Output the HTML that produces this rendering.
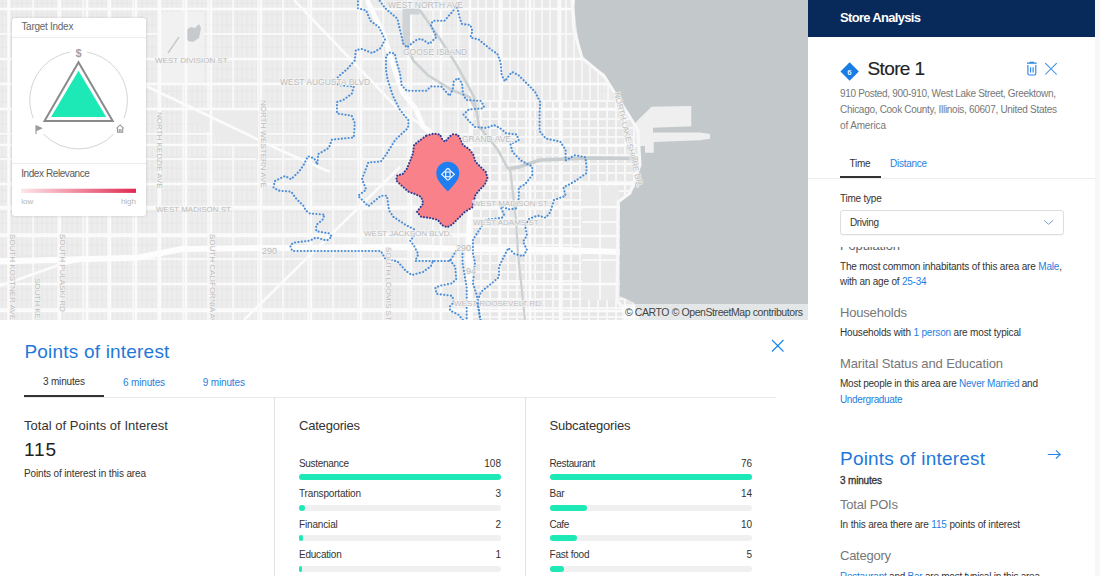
<!DOCTYPE html>
<html><head><meta charset="utf-8">
<style>
*{margin:0;padding:0;box-sizing:border-box}
html,body{width:1100px;height:576px;overflow:hidden;background:#fff;font-family:"Liberation Sans",sans-serif;color:#333;position:relative}
.a{position:absolute}
.t{position:absolute;white-space:nowrap;line-height:1}
.b{color:#1f7fdf}
#map{position:absolute;left:0;top:0;width:808px;height:320px;overflow:hidden;background:#e9e9e9}
.bar{position:absolute;height:6px;border-radius:3px;background:#f0f0f0}
.bar i{position:absolute;left:0;top:0;height:6px;border-radius:3px;background:#1de9b6}
</style></head><body>
<div id="map"><svg width="808" height="320" viewBox="0 0 808 320" style="position:absolute;left:0;top:0">
<rect width="808" height="320" fill="#ededed"/>
<path d="M2 0V320M7 0V320M12 0V320M17 0V320M22 0V320M27 0V320M32 0V320M37 0V320M42 0V320M47 0V320M52 0V320M57 0V320M62 0V320M67 0V320M72 0V320M77 0V320M82 0V320M87 0V320M92 0V320M97 0V320M102 0V320M107 0V320M112 0V320M117 0V320M122 0V320M127 0V320M132 0V320M137 0V320M142 0V320M147 0V320M152 0V320M157 0V320M162 0V320M167 0V320M172 0V320M177 0V320M182 0V320M187 0V320M192 0V320M197 0V320M202 0V320M207 0V320M212 0V320M217 0V320M222 0V320M227 0V320M232 0V320M237 0V320M242 0V320M247 0V320M252 0V320M257 0V320M262 0V320M267 0V320M272 0V320M277 0V320M282 0V320M287 0V320M292 0V320M297 0V320M302 0V320M307 0V320M312 0V320M317 0V320M322 0V320M327 0V320M332 0V320M337 0V320M342 0V320M347 0V320M352 0V320M357 0V320M362 0V320M367 0V320M372 0V320M377 0V320M382 0V320M387 0V320M392 0V320M397 0V320M402 0V320M407 0V320M412 0V320M417 0V320M422 0V320M427 0V320M432 0V320M437 0V320M442 0V320M447 0V320M452 0V320M457 0V320M462 0V320M467 0V320M472 0V320M477 0V320M482 0V320M487 0V320M492 0V320M497 0V320M502 0V320M507 0V320M512 0V320M517 0V320M522 0V320M527 0V320M532 0V320M537 0V320M542 0V320M547 0V320M552 0V320M557 0V320M562 0V320M567 0V320M572 0V320M577 0V320M582 0V320M587 0V320M592 0V320M597 0V320M602 0V320M607 0V320M612 0V320M617 0V320M622 0V320M627 0V320M632 0V320M637 0V320M642 0V320M647 0V320M652 0V320M657 0V320M662 0V320M667 0V320M672 0V320M677 0V320M682 0V320M687 0V320M692 0V320M697 0V320M702 0V320M707 0V320M712 0V320M717 0V320M722 0V320M727 0V320M732 0V320M737 0V320M742 0V320M747 0V320M752 0V320M757 0V320M762 0V320M767 0V320M772 0V320M777 0V320M782 0V320M787 0V320M792 0V320M797 0V320M802 0V320M807 0V320M0 3H808M0 14H808M0 25H808M0 36H808M0 47H808M0 58H808M0 69H808M0 80H808M0 91H808M0 102H808M0 113H808M0 124H808M0 135H808M0 146H808M0 157H808M0 168H808M0 179H808M0 190H808M0 201H808M0 212H808M0 223H808M0 234H808M0 245H808M0 256H808M0 267H808M0 278H808M0 289H808M0 300H808M0 311H808" stroke="#e4e4e4" stroke-width="0.8" fill="none"/>
<path d="M8 0V320M33 0V320M58 0V320M83 0V320M108 0V320M133 0V320M158 0V320M183 0V320M208 0V320M233 0V320M258 0V320M283 0V320M308 0V320M333 0V320M358 0V320M383 0V320M408 0V320M433 0V320M458 0V320M483 0V320M508 0V320M533 0V320M558 0V320M583 0V320M608 0V320M633 0V320M658 0V320M683 0V320M708 0V320M733 0V320M758 0V320M783 0V320M0 9H808M0 34H808M0 59H808M0 84H808M0 109H808M0 134H808M0 159H808M0 184H808M0 209H808M0 234H808M0 259H808M0 284H808M0 309H808" stroke="#f8f8f8" stroke-width="1.8" fill="none"/>
<path d="M470 100H660V320H470Z" fill="#e7e7e7"/>
<path d="M472 100V320M481 100V320M490 100V320M499 100V320M508 100V320M517 100V320M526 100V320M535 100V320M544 100V320M553 100V320M562 100V320M571 100V320M580 100V320M589 100V320M598 100V320M607 100V320M616 100V320M625 100V320M634 100V320M643 100V320M652 100V320M470 101H660M470 110H660M470 119H660M470 128H660M470 137H660M470 146H660M470 155H660M470 164H660M470 173H660M470 182H660M470 191H660M470 200H660M470 209H660M470 218H660M470 227H660M470 236H660M470 245H660M470 254H660M470 263H660M470 272H660M470 281H660M470 290H660M470 299H660M470 308H660M470 317H660" stroke="#f7f7f7" stroke-width="2" fill="none"/>
<path d="M462 0H600V100H462Z" fill="#e9e9e9"/>
<path d="M470 0V100M478 0V100M486 0V100M494 0V100M502 0V100M510 0V100M518 0V100M526 0V100M534 0V100M542 0V100M550 0V100M558 0V100M566 0V100M574 0V100M582 0V100M590 0V100M598 0V100M462 9H600M462 34H600M462 59H600M462 84H600" stroke="#f7f7f7" stroke-width="1.8" fill="none"/>
<path d="M160 12H204V84H160Z" fill="#f1f1f1"/>
<path d="M186 30l5-3 4 1 4-4 2 4-2 10-6 4-5-1-3-5Z" fill="#c6cacc"/><path d="M179 37L168 53" stroke="#c6cacc" stroke-width="1.5"/>
<path d="M185 110H258V160L185 118Z" fill="#ebebeb"/>
<path d="M582 186H619V300H582Z" fill="#eaeaea"/><path d="M582 222H619M582 260H619M600 186V300" stroke="#f8f8f8" stroke-width="2"/>
<path d="M0 9H808M0 59H808M0 84H808M0 109H808M0 145H808M0 184H808M0 207H808M0 236H808M0 284H808M0 311H808M9 0V320M60 0V320M87 0V320M110 0V320M136 0V320M160 0V320M186 0V320M211 0V320M261 0V320M311 0V320M361 0V320M411 0V320M441 0V320M470 0V320M500 0V320M530 0V320M560 0V320" stroke="#fbfbfb" stroke-width="2.6" fill="none"/>
<path d="M146 86L280 150L330 172M294 0L400 111L445 140M0 286L56 266L90 258M244 320L400 167" stroke="#fbfbfb" stroke-width="2.6" fill="none"/>
<path d="M0 261.4L86 259L137.5 257.7L181.6 249L270 247.9L400 247L470 249L560 250L620 252" stroke="#fdfdfd" stroke-width="6" fill="none"/>
<path d="M367 0L384.3 36.5L391.6 60.75L402.5 92.3L416 109L423 126.4L440 140L462 160L470 200L468 250L470 320" stroke="#fdfdfd" stroke-width="5" fill="none"/>
<path d="M419.5 9.7L440 39L457 65.6L474 97L479 126.4M406 9.7L406 44L413.5 60.75L428 75.3L452 90L469.4 97L476.6 111.8L479 126.4L498 150L508 169" stroke="#cbd0d2" stroke-width="2.6" fill="none"/>
<path d="M402.5 8.5H419.5V14.6H410V45H402.5Z" fill="#cfd3d5"/>
<path d="M508 169L519 167L540 160L590 158L638 158.5" stroke="#c8cdcf" stroke-width="3.5" fill="none"/>
<path d="M510 168L516 220L518 254L525 320" stroke="#cdd1d3" stroke-width="2.2" fill="none"/>
<path d="M575 0L574.4 8.3L576.4 27.8L580.5 52.8L584.7 59.7L594.4 68L604 73.6L615 91.7L626 110L635 124L638 146.6L638 169.5L634.7 187L627.7 195.6L620 200.8L619.7 296L633.75 302.5L640 320L808 320L808 0Z" fill="#c3c9cb"/>
<path d="M634 124L651.4 106.7L691.25 106L691.25 126.25L653 127.8L653 132.5L699.8 132.5L710 134L710 138.75L699.8 140.3L653.75 141.9L653.75 152.8L645 152.8L645 146L637 146Z" fill="#efefef"/>
<path d="M637 157H640V162H637Z" fill="#cdd1d3"/>
<path d="M572 0L574 30L582 58L604 76L638 130L640 165L630 193L618 202L617 300L630 320" stroke="#f8f8f8" stroke-width="3" fill="none"/>
<path d="M358.0 -2.0 L357.9 8.3 L366.2 10.4 L370.4 20.8 L378.8 27.0 L385.0 39.6 L380.8 47.9 L372.5 53.1 L362.0 49.0 L355.8 50.0 L354.8 60.4 L347.5 68.8 L341.2 74.0 L334.0 81.2 L339.0 85.4 L353.8 86.5 L351.7 93.8 L343.3 100.0 L337.0 102.0 L337.0 113.5 L351.7 115.6 L354.8 123.0 L353.8 137.5 L343.3 138.5 L331.9 139.6 L328.8 148.0 L318.3 154.0 L317.3 164.6 L314.2 158.3 L308.0 156.2 L303.8 164.6 L299.6 170.8 L291.2 179.2 L285.0 176.0 L274.6 181.2 L273.5 187.5 L278.8 190.6 L291.2 191.7 L296.5 199.0 L303.8 206.2 L305.8 210.4 L310.0 213.5 L324.6 214.6 L322.5 219.8 L316.2 225.0 L316.2 231.2 L328.8 233.3 L331.9 236.5 L326.7 240.6 L316.2 237.5 L310.0 240.6 L293.3 242.7 L290.2 245.8 L292.3 251.0 L322.5 251.0 L380.8 251.0 L385.0 258.3 L397.5 261.5 L405.8 270.8 L412.0 275.0 L423.0 272.0 L431.0 266.0 L433.0 261.0 L450.0 261.0 L453.0 256.0 L456.0 251.0 L462.5 250.0 L462.5 262.5 L464.6 275.0 L466.7 287.5 L466.7 322.0" fill="none" stroke="#4a8ed8" stroke-width="2.1" stroke-linecap="round" stroke-dasharray="0.1 3.3" stroke-linejoin="round"/>
<path d="M377.7 -2.0 L385.0 8.0 L397.5 18.8 L400.0 30.0 L403.4 43.9 L406.9 47.4 L415.6 40.4 L420.8 38.7 L429.4 43.9 L436.4 37.0 L433.0 30.0 L430.8 25.0 L432.9 20.8 L444.4 20.8 L451.7 12.5 L456.9 6.2 L460.0 18.8 L462.0 24.0 L470.4 25.0 L472.5 31.2 L470.4 37.5 L478.8 39.6 L489.0 48.0 L497.5 54.0 L500.6 62.5 L501.7 75.0 L504.8 81.2 L508.0 77.0 L512.0 71.9 L518.3 75.0 L526.7 83.3 L535.0 91.7 L540.2 102.0 L539.6 112.5 L539.6 131.2 L545.8 138.5 L560.4 141.7 L565.6 150.0 L565.6 160.4 L575.0 155.2 L585.4 157.3 L586.5 166.7 L586.5 173.0 L575.0 181.2 L563.5 187.5 L565.6 195.8 L554.0 200.0 L550.0 212.5 L545.8 217.7 L537.5 215.6 L529.2 218.8 L525.0 225.0 L527.0 235.4 L523.0 241.7 L527.0 250.0 L523.0 256.2 L514.6 254.0 L508.3 248.0 L502.0 260.4 L499.0 266.7 L499.0 277.0 L491.7 283.3 L481.2 291.7 L477.0 302.0 L481.2 322.0" fill="none" stroke="#4a8ed8" stroke-width="2.1" stroke-linecap="round" stroke-dasharray="0.1 3.3" stroke-linejoin="round"/>
<path d="M433.0 261.0 L415.2 261.0 L418.3 254.2 L414.0 245.8 L410.0 240.6 L414.0 236.5 L414.0 229.2 L405.8 225.0 L393.3 216.7 L389.0 210.4 L387.0 195.8 L380.8 195.8 L368.3 206.2 L358.0 195.8 L366.2 189.6 L362.0 179.2 L368.3 162.5 L380.8 161.5 L385.0 156.2 L395.4 139.6 L408.0 128.0 L408.6 120.5 L400.0 110.0 L393.0 96.0 L387.8 80.3 L386.0 70.0 L386.0 56.0 L389.5 52.6 L394.7 53.4 L396.5 61.2 L400.0 73.4 L401.7 85.6 L406.9 90.8 L426.0 90.8 L431.2 86.4 L441.2 86.5 L449.6 95.8 L452.7 89.6 L453.8 81.2 L458.0 78.0 L462.0 83.3 L463.0 93.8 L466.2 100.0 L480.8 101.0 L484.0 106.2 L483.3 108.3 L468.8 109.4 L463.5 114.6 L468.8 120.8 L475.0 127.0 L486.5 128.0 L493.8 125.0 L500.0 128.0 L506.2 133.3 L516.7 134.4 L518.8 140.6 L510.4 143.8 L512.5 152.0 L520.8 160.4 L532.3 166.7 L532.3 175.0 L525.0 184.4 L518.8 187.5 L518.8 198.0 L516.7 208.3 L508.3 209.4 L500.0 205.2 L504.0 214.6 L502.0 217.7 L485.4 219.8 L481.2 227.0 L473.0 239.6 L473.0 254.0 L475.0 262.5 L473.0 283.3 L477.0 296.0 L479.0 310.4 L480.0 322.0" fill="none" stroke="#4a8ed8" stroke-width="2.1" stroke-linecap="round" stroke-dasharray="0.1 3.3" stroke-linejoin="round"/>
<path d="M450.0 260.4 L455.2 266.7 L456.2 279.2 L452.0 283.3 L441.7 285.4 L435.4 287.5 L436.5 293.8 L452.0 295.8 L454.2 302.0 L450.0 306.2 L450.0 310.4 L458.3 314.6 L464.6 322.0" fill="none" stroke="#4a8ed8" stroke-width="2.1" stroke-linecap="round" stroke-dasharray="0.1 3.3" stroke-linejoin="round"/>
<path d="M426.5 135.6 L433.8 133.5 L440.0 134.6 L442.0 138.8 L445.2 141.9 L449.4 136.7 L452.5 134.2 L457.7 134.6 L460.8 139.8 L462.9 145.0 L469.2 149.2 L473.3 154.4 L475.4 161.7 L480.6 166.9 L485.8 172.0 L487.5 178.3 L484.8 184.6 L479.6 189.8 L475.4 195.0 L473.3 203.3 L472.3 207.5 L465.0 211.7 L458.8 217.9 L452.5 224.2 L447.3 227.3 L442.0 225.2 L437.9 220.0 L429.6 217.9 L421.2 216.9 L417.0 211.7 L420.2 207.5 L423.3 203.3 L421.2 197.0 L415.0 194.0 L408.8 191.9 L400.4 184.6 L396.2 180.4 L397.3 175.2 L402.5 174.2 L406.7 169.0 L409.8 161.7 L413.0 153.3 L414.0 145.0 L419.2 140.8Z" fill="#f9818a" stroke="#2c3d92" stroke-width="2.1" stroke-linecap="round" stroke-dasharray="0.1 3" stroke-linejoin="round"/>
<path d="M447.8 191.6C443 186 436.3 180.5 436.3 173.2A11.5 11.5 0 0 1 459.3 173.2C459.3 180.5 452.6 186 447.8 191.6Z" fill="#1f7ef0"/>
<g fill="none" stroke="#fff" stroke-width="1.1"><path d="M441.6 174.3L445.6 170.6Q447.9 166.6 450.2 170.6L454.4 174.3L450.2 178Q447.9 182 445.6 178Z"/><rect x="445.7" y="172" width="4.4" height="4.8"/></g>
<text x="388" y="7.5" font-family="Liberation Sans" font-size="8.5" fill="#bdbdbd" stroke="#f4f4f4" stroke-width="1.4" paint-order="stroke" letter-spacing="0" text-anchor="start">WEST NORTH AVE</text>
<text x="403" y="55" font-family="Liberation Sans" font-size="8.5" fill="#bdbdbd" stroke="#f4f4f4" stroke-width="1.4" paint-order="stroke" letter-spacing="0" text-anchor="start">GOOSE ISLAND</text>
<text x="280" y="84.5" font-family="Liberation Sans" font-size="8.5" fill="#bdbdbd" stroke="#f4f4f4" stroke-width="1.4" paint-order="stroke" letter-spacing="0" text-anchor="start">WEST AUGUSTA BLVD.</text>
<text x="462" y="141.5" font-family="Liberation Sans" font-size="8.5" fill="#bdbdbd" stroke="#f4f4f4" stroke-width="1.4" paint-order="stroke" letter-spacing="0" text-anchor="start">GRAND AVE.</text>
<text x="155" y="62.5" font-family="Liberation Sans" font-size="8" fill="#bdbdbd" stroke="#f4f4f4" stroke-width="1.4" paint-order="stroke" letter-spacing="0" text-anchor="start">WEST DIVISION ST.</text>
<text x="156" y="212" font-family="Liberation Sans" font-size="8" fill="#bdbdbd" stroke="#f4f4f4" stroke-width="1.4" paint-order="stroke" letter-spacing="0" text-anchor="start">WEST MADISON ST.</text>
<text x="473" y="206" font-family="Liberation Sans" font-size="8" fill="#bdbdbd" stroke="#f4f4f4" stroke-width="1.4" paint-order="stroke" letter-spacing="0" text-anchor="start">WEST MADISON ST.</text>
<text x="473" y="224.5" font-family="Liberation Sans" font-size="8" fill="#bdbdbd" stroke="#f4f4f4" stroke-width="1.4" paint-order="stroke" letter-spacing="0" text-anchor="start">WEST ADAMS ST</text>
<text x="364" y="235.5" font-family="Liberation Sans" font-size="8" fill="#bdbdbd" stroke="#f4f4f4" stroke-width="1.4" paint-order="stroke" letter-spacing="0" text-anchor="start">WEST JACKSON BLVD.</text>
<text x="454" y="306" font-family="Liberation Sans" font-size="8" fill="#bdbdbd" stroke="#f4f4f4" stroke-width="1.4" paint-order="stroke" letter-spacing="0" text-anchor="start">WEST ROOSEVELT RD.</text>
<text x="261" y="100" font-family="Liberation Sans" font-size="8" fill="#bdbdbd" stroke="#f4f4f4" stroke-width="1.4" paint-order="stroke" letter-spacing="0" text-anchor="start" transform="rotate(90 261 100)">NORTH WESTERN AVE</text>
<text x="157" y="112" font-family="Liberation Sans" font-size="8" fill="#bdbdbd" stroke="#f4f4f4" stroke-width="1.4" paint-order="stroke" letter-spacing="0" text-anchor="start" transform="rotate(90 157 112)">NORTH KEDZIE AVE</text>
<text x="10" y="234" font-family="Liberation Sans" font-size="8" fill="#bdbdbd" stroke="#f4f4f4" stroke-width="1.4" paint-order="stroke" letter-spacing="0" text-anchor="start" transform="rotate(90 10 234)">SOUTH KOSTNER AVE</text>
<text x="60" y="234" font-family="Liberation Sans" font-size="8" fill="#bdbdbd" stroke="#f4f4f4" stroke-width="1.4" paint-order="stroke" letter-spacing="0" text-anchor="start" transform="rotate(90 60 234)">SOUTH PULASKI RD</text>
<text x="35" y="278" font-family="Liberation Sans" font-size="8" fill="#bdbdbd" stroke="#f4f4f4" stroke-width="1.4" paint-order="stroke" letter-spacing="0" text-anchor="start" transform="rotate(90 35 278)">SOUTH KEELER</text>
<text x="210" y="234" font-family="Liberation Sans" font-size="8" fill="#bdbdbd" stroke="#f4f4f4" stroke-width="1.4" paint-order="stroke" letter-spacing="0" text-anchor="start" transform="rotate(90 210 234)">SOUTH CALIFORNIA AVE</text>
<text x="386" y="247" font-family="Liberation Sans" font-size="8" fill="#bdbdbd" stroke="#f4f4f4" stroke-width="1.4" paint-order="stroke" letter-spacing="0" text-anchor="start" transform="rotate(90 386 247)">SOUTH LOOMIS ST</text>
<text x="262" y="253.5" font-family="Liberation Sans" font-size="9" fill="#bdbdbd" stroke="#f4f4f4" stroke-width="1.4" paint-order="stroke" letter-spacing="0" text-anchor="start">290</text>
<text x="456" y="251" font-family="Liberation Sans" font-size="9" fill="#bdbdbd" stroke="#f4f4f4" stroke-width="1.4" paint-order="stroke" letter-spacing="0" text-anchor="start">290</text>
<text x="466" y="274" font-family="Liberation Sans" font-size="9" fill="#bdbdbd" stroke="#f4f4f4" stroke-width="1.4" paint-order="stroke" letter-spacing="0" text-anchor="start">94</text>
<text x="614" y="93" font-family="Liberation Sans" font-size="8" fill="#bdbdbd" stroke="#f4f4f4" stroke-width="1.4" paint-order="stroke" letter-spacing="0" text-anchor="start" transform="rotate(76 614 93)">NORTH LAKE SHORE DR.</text>
</svg></div>

<!-- target index card -->
<div class="a" style="left:12px;top:18px;width:134px;height:198px;background:#fff;border-radius:3px;box-shadow:0 0 3px rgba(0,0,0,0.18)"></div>
<div class="a" style="left:12px;top:37px;width:134px;height:1px;background:#ececec"></div>
<div class="a" style="left:12px;top:163px;width:134px;height:1px;background:#ececec"></div>
<svg class="a" style="left:0;top:0" width="160" height="220" viewBox="0 0 160 220">
 <path d="M87.07 52.14A48.8 48.8 0 0 1 123.97 118.16" fill="none" stroke="#cfcfcf" stroke-width="0.9"/>
 <path d="M113.70 134.10A48.8 48.8 0 0 1 43.50 134.10" fill="none" stroke="#cfcfcf" stroke-width="0.9"/>
 <path d="M33.23 118.16A48.8 48.8 0 0 1 70.13 52.14" fill="none" stroke="#cfcfcf" stroke-width="0.9"/>
 <path d="M78.5 62.3L44.5 121.1H112.7Z" fill="none" stroke="#8a8a8a" stroke-width="2" stroke-linejoin="miter"/>
 <path d="M78.5 70.8L51 117H106.2Z" fill="#1de9b6"/>
 <text x="78.6" y="56.5" font-family="Liberation Sans" font-size="11" font-weight="bold" fill="#a0a0a8" text-anchor="middle">$</text>
 <path d="M36 134V125.5M36.2 125.8L41.5 128.2L36.2 130.6Z" fill="#9a9a9a" stroke="#9a9a9a" stroke-width="1.1"/>
 <path d="M116.5 128.3L120.1 124.9L123.7 128.3M117.5 127.6V132.3H122.7V127.6M119.2 132.3V129.8H121V132.3" fill="none" stroke="#9a9a9a" stroke-width="1.1"/>
 <defs><linearGradient id="rg" x1="0" x2="1"><stop offset="0" stop-color="#fde6ea"/><stop offset="1" stop-color="#e02a50"/></linearGradient></defs>
 <rect x="21.2" y="188.7" width="114.8" height="4.2" fill="url(#rg)"/>
</svg>

<!-- attribution -->
<div class="a" style="left:622px;top:304px;width:186px;height:16px;background:rgba(255,255,255,0.55)"></div>

<!-- bottom panel -->
<div class="a" style="left:0;top:320px;width:808px;height:256px;background:#fff"></div>
<svg class="a" style="left:770px;top:338px" width="16" height="16" viewBox="0 0 16 16"><path d="M2 2L13.5 13.5M13.5 2L2 13.5" stroke="#1a86e8" stroke-width="1.2"/></svg>
<div class="a" style="left:24px;top:396.5px;width:752px;height:1px;background:#e8e8e8"></div>
<div class="a" style="left:24px;top:395px;width:80px;height:2px;background:#333"></div>
<div class="a" style="left:274px;top:397px;width:1px;height:179px;background:#e3e3e3"></div>
<div class="a" style="left:525px;top:397px;width:1px;height:179px;background:#e3e3e3"></div>
<div class="bar" style="left:299px;top:474.3px;width:202px"><i style="width:202px"></i></div>
<div class="bar" style="left:299px;top:504.8px;width:202px"><i style="width:6px"></i></div>
<div class="bar" style="left:299px;top:535.3px;width:202px"><i style="width:4px"></i></div>
<div class="bar" style="left:299px;top:565.8px;width:202px"><i style="width:2.5px"></i></div>
<div class="bar" style="left:549.5px;top:474.3px;width:202.5px"><i style="width:202.5px"></i></div>
<div class="bar" style="left:549.5px;top:504.8px;width:202.5px"><i style="width:37.5px"></i></div>
<div class="bar" style="left:549.5px;top:535.3px;width:202.5px"><i style="width:27px"></i></div>
<div class="bar" style="left:549.5px;top:565.8px;width:202.5px"><i style="width:14px"></i></div>

<!-- sidebar -->
<div class="a" style="left:808px;top:0;width:287px;height:576px;background:#fff"></div>
<div class="a" style="left:1095px;top:0;width:5px;height:576px;background:#f7f7f7"></div>
<div class="a" style="left:808px;top:0;width:287px;height:37px;background:#072a5b"></div>
<div class="a" style="left:842.8px;top:65.4px;width:13.3px;height:13.3px;background:#1a7de6;transform:rotate(45deg)"></div>
<div class="t" style="left:845.5px;top:68.6px;width:8px;text-align:center;font-size:7px;color:#fff;-webkit-text-stroke:0.2px #fff">6</div>
<svg class="a" style="left:1025px;top:61px" width="14" height="16" viewBox="0 0 14 16"><path d="M2 2.1H11.7M5.2 2V1.3H8.3V2" fill="none" stroke="#2a86e6" stroke-width="1.3"/><path d="M2.9 3.9V12.5Q2.9 14 4.4 14H9.3Q10.8 14 10.8 12.5V3.9M5.6 6.2V11.6M8.1 6.2V11.6" fill="none" stroke="#2a86e6" stroke-width="1.15"/></svg>
<svg class="a" style="left:1043px;top:61px" width="16" height="16" viewBox="0 0 16 16"><path d="M2.3 2.1L13.7 13.5M13.7 2.1L2.3 13.5" stroke="#3a8ce6" stroke-width="1.05"/></svg>
<div class="a" style="left:808px;top:178px;width:287px;height:1px;background:#ececec"></div>
<div class="a" style="left:840px;top:176px;width:41px;height:2px;background:#333"></div>
<div class="a" style="left:808px;top:247px;width:287px;height:8px;overflow:hidden">
  <div class="t" style="left:32px;top:-8.5px;font-size:13px;color:#666;letter-spacing:-0.15px">Population</div>
</div>
<div class="a" style="left:840px;top:210px;width:224px;height:25px;border:1px solid #dedede;border-radius:3px;background:#fff;box-shadow:0 1px 1px rgba(0,0,0,0.04)"></div>
<svg class="a" style="left:1043px;top:219px" width="12" height="7" viewBox="0 0 12 7"><path d="M1.1 1.4L5.5 5.3L10.3 1.2" fill="none" stroke="#7ea2d4" stroke-width="1"/></svg>
<svg class="a" style="left:1046px;top:448px" width="16" height="14" viewBox="0 0 16 14"><path d="M1.8 6.5H14.2M9.9 2.4L14.3 6.5L9.9 10.5" fill="none" stroke="#2a86e6" stroke-width="1.1"/></svg>

<div class="t" style="top:10.60px;font-size:13px;color:#fff;font-weight:bold;letter-spacing:-0.680px;left:840.00px;">Store Analysis</div>
<div class="t" style="top:58.92px;font-size:19px;color:#222;letter-spacing:-0.628px;left:867.50px;-webkit-text-stroke:0.15px #222;">Store 1</div>
<div class="t" style="top:89.23px;font-size:10px;color:#777;letter-spacing:-0.326px;left:840.00px;">910 Posted, 900-910, West Lake Street, Greektown,</div>
<div class="t" style="top:105.13px;font-size:10px;color:#777;letter-spacing:-0.287px;left:840.00px;">Chicago, Cook County, Illinois, 60607, United States</div>
<div class="t" style="top:121.03px;font-size:10px;color:#777;letter-spacing:-0.139px;left:840.00px;">of America</div>
<div class="t" style="top:158.53px;font-size:10px;color:#333;letter-spacing:-0.286px;left:849.50px;">Time</div>
<div class="t" style="top:158.84px;font-size:10px;color:#1f7fdf;letter-spacing:-0.272px;left:890.00px;">Distance</div>
<div class="t" style="top:193.53px;font-size:10px;color:#333;letter-spacing:-0.229px;left:840.00px;">Time type</div>
<div class="t" style="top:217.53px;font-size:10px;color:#333;letter-spacing:-0.354px;left:850.00px;">Driving</div>
<div class="t" style="top:261.54px;font-size:10px;color:#333;letter-spacing:-0.177px;left:840.00px;">The most common inhabitants of this area are <span class=b>Male</span>,</div>
<div class="t" style="top:277.04px;font-size:10px;color:#333;letter-spacing:-0.212px;left:840.00px;">with an age of <span class=b>25-34</span></div>
<div class="t" style="top:305.80px;font-size:13px;color:#777;letter-spacing:-0.184px;left:840.00px;">Households</div>
<div class="t" style="top:328.34px;font-size:10px;color:#333;letter-spacing:-0.172px;left:840.00px;">Households with <span class=b>1 person</span> are most typical</div>
<div class="t" style="top:357.00px;font-size:13px;color:#777;letter-spacing:-0.119px;left:840.00px;">Marital Status and Education</div>
<div class="t" style="top:379.04px;font-size:10px;color:#333;letter-spacing:-0.245px;left:840.00px;">Most people in this area are <span class=b>Never Married</span> and</div>
<div class="t" style="top:394.84px;font-size:10px;color:#333;letter-spacing:-0.352px;left:840.00px;"><span class=b>Undergraduate</span></div>
<div class="t" style="top:448.62px;font-size:19px;color:#1f78d8;letter-spacing:0.204px;left:840.00px;">Points of interest</div>
<div class="t" style="top:475.54px;font-size:10px;color:#333;letter-spacing:-0.170px;left:840.00px;-webkit-text-stroke:0.3px #333;">3 minutes</div>
<div class="t" style="top:498.20px;font-size:13px;color:#777;letter-spacing:-0.219px;left:840.00px;">Total POIs</div>
<div class="t" style="top:519.93px;font-size:10px;color:#333;letter-spacing:-0.163px;left:840.00px;">In this area there are <span class=b>115</span> points of interest</div>
<div class="t" style="top:548.60px;font-size:13px;color:#777;letter-spacing:-0.250px;left:840.00px;">Category</div>
<div class="t" style="top:572.03px;font-size:10px;color:#333;letter-spacing:-0.239px;left:840.00px;"><span class=b>Restaurant</span> and <span class=b>Bar</span> are most typical in this area</div>
<div class="t" style="top:341.92px;font-size:19px;color:#1f78d8;letter-spacing:0.204px;left:24.40px;">Points of interest</div>
<div class="t" style="top:377.44px;font-size:10px;color:#333;letter-spacing:-0.157px;left:42.90px;">3 minutes</div>
<div class="t" style="top:378.34px;font-size:10px;color:#1f7fdf;letter-spacing:-0.157px;left:123.00px;">6 minutes</div>
<div class="t" style="top:378.34px;font-size:10px;color:#1f7fdf;letter-spacing:-0.157px;left:202.80px;">9 minutes</div>
<div class="t" style="top:419.00px;font-size:13px;color:#333;letter-spacing:0.035px;left:24.00px;">Total of Points of Interest</div>
<div class="t" style="top:439.72px;font-size:19px;color:#222;letter-spacing:0.852px;left:24.00px;">115</div>
<div class="t" style="top:468.54px;font-size:10px;color:#333;letter-spacing:-0.140px;left:24.00px;">Points of interest in this area</div>
<div class="t" style="top:419.00px;font-size:13px;color:#333;letter-spacing:-0.208px;left:299.00px;">Categories</div>
<div class="t" style="top:419.00px;font-size:13px;color:#333;letter-spacing:-0.177px;left:549.50px;">Subcategories</div>
<div class="t" style="top:458.84px;font-size:10px;color:#333;letter-spacing:-0.314px;left:299.00px;">Sustenance</div>
<div class="t" style="top:458.84px;font-size:10px;color:#333;left:484.31px;">108</div>
<div class="t" style="top:489.34px;font-size:10px;color:#333;letter-spacing:-0.162px;left:299.00px;">Transportation</div>
<div class="t" style="top:489.34px;font-size:10px;color:#333;left:495.44px;">3</div>
<div class="t" style="top:519.83px;font-size:10px;color:#333;letter-spacing:-0.154px;left:299.00px;">Financial</div>
<div class="t" style="top:519.83px;font-size:10px;color:#333;left:495.44px;">2</div>
<div class="t" style="top:550.33px;font-size:10px;color:#333;letter-spacing:-0.223px;left:299.00px;">Education</div>
<div class="t" style="top:550.33px;font-size:10px;color:#333;left:495.44px;">1</div>
<div class="t" style="top:458.84px;font-size:10px;color:#333;letter-spacing:-0.358px;left:549.50px;">Restaurant</div>
<div class="t" style="top:458.84px;font-size:10px;color:#333;left:740.88px;">76</div>
<div class="t" style="top:489.34px;font-size:10px;color:#333;letter-spacing:-0.281px;left:549.50px;">Bar</div>
<div class="t" style="top:489.34px;font-size:10px;color:#333;left:740.88px;">14</div>
<div class="t" style="top:519.83px;font-size:10px;color:#333;letter-spacing:-0.475px;left:549.50px;">Cafe</div>
<div class="t" style="top:519.83px;font-size:10px;color:#333;left:740.88px;">10</div>
<div class="t" style="top:550.33px;font-size:10px;color:#333;letter-spacing:-0.213px;left:549.50px;">Fast food</div>
<div class="t" style="top:550.33px;font-size:10px;color:#333;left:746.44px;">5</div>
<div class="t" style="top:22.04px;font-size:10px;color:#666;letter-spacing:-0.277px;left:21.40px;">Target Index</div>
<div class="t" style="top:169.44px;font-size:10px;color:#5a5a5a;letter-spacing:-0.414px;left:21.20px;">Index Relevance</div>
<div class="t" style="top:197.83px;font-size:8px;color:#b5b5b5;left:21.20px;">low</div>
<div class="t" style="top:197.83px;font-size:8px;color:#b5b5b5;left:120.88px;">high</div>
<div class="t" style="top:306.61px;font-size:10.5px;color:#444;letter-spacing:-0.414px;left:625.00px;">© CARTO © OpenStreetMap contributors</div>
</body></html>
